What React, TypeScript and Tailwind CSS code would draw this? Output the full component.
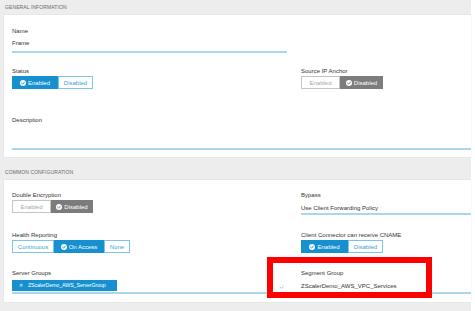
import React from "react";

type Opt = { label: string; w: string; active?: boolean };

function Check({ color }: { color: string }) {
  return (
    <svg width="6" height="6" viewBox="0 0 10 10" className="mr-[2px] shrink-0">
      <circle cx="5" cy="5" r="5" fill="#fff" />
      <path d="M2.6 5.2 L4.4 6.9 L7.5 3.4" stroke={color} strokeWidth="1.6" fill="none" strokeLinecap="round" strokeLinejoin="round" />
    </svg>
  );
}

function Toggle({ opts, tone }: { opts: Opt[]; tone: "blue" | "gray" }) {
  const blue = tone === "blue";
  return (
    <div className="flex h-[13px] mt-[1px] text-[6px] leading-none whitespace-nowrap">
      {opts.map((o) =>
        o.active ? (
          <div
            key={o.label}
            className={`${o.w} flex items-center justify-center text-white ${blue ? "bg-[#1690cf] border border-[#1690cf]" : "bg-[#7c7c7c] border border-[#7c7c7c]"}`}
          >
            <Check color={blue ? "#1690cf" : "#7c7c7c"} />
            {o.label}
          </div>
        ) : (
          <div
            key={o.label}
            className={`${o.w} flex items-center justify-center bg-white ${blue ? "border border-[#7cc4e8] text-[#3a9fd6]" : "border border-[#c4c4c4] text-[#a8a8a8]"}`}
          >
            {o.label}
          </div>
        )
      )}
    </div>
  );
}

function Label({ children }: { children: React.ReactNode }) {
  return <div className="text-[6px] leading-[8px] text-[#333] whitespace-nowrap">{children}</div>;
}

function Header({ children }: { children: React.ReactNode }) {
  return (
    <div className="h-[15px] flex items-center pl-[5px] text-[5px] text-[#6a6a6a] uppercase tracking-[0.1px]">
      {children}
    </div>
  );
}

export default function App() {
  return (
    <div
      className="relative w-[475px] h-[311px] bg-white overflow-hidden"
      style={{ fontFamily: '"Liberation Sans", Arial, sans-serif' }}
    >
      <div className="w-[471px] h-[311px] bg-[#ededed]">
        <Header>General Information</Header>
        <div className="ml-[4px] bg-white pl-[8px] pt-[12px] pb-[7px] shadow-[0_0_1px_rgba(0,0,0,0.15)]">
          <div className="w-[275px]">
            <Label>Name</Label>
            <div className="mt-[4px] pb-[4px] border-b-2 border-[#a9d8ee] text-[6px] leading-[8px] text-[#333]">
              Frame
            </div>
          </div>
          <div className="flex mt-[14px]">
            <div className="w-[275px]">
              <Label>Status</Label>
              <Toggle
                tone="blue"
                opts={[
                  { label: "Enabled", w: "w-[46px]", active: true },
                  { label: "Disabled", w: "w-[35px]" },
                ]}
              />
            </div>
            <div className="ml-[14px] flex-1">
              <Label>Source IP Anchor</Label>
              <Toggle
                tone="gray"
                opts={[
                  { label: "Enabled", w: "w-[39px]" },
                  { label: "Disabled", w: "w-[43px]", active: true },
                ]}
              />
            </div>
          </div>
          <div className="mt-[27px]">
            <Label>Description</Label>
            <div className="h-[26px] border-b-2 border-[#a9d8ee]" />
          </div>
        </div>

        <div className="mt-[8px]">
          <Header>Common Configuration</Header>
        </div>
        <div className="ml-[4px] bg-white pl-[8px] pt-[11px] pb-[8px] shadow-[0_0_1px_rgba(0,0,0,0.15)]">
          <div className="flex">
            <div className="w-[275px]">
              <Label>Double Encryption</Label>
              <Toggle
                tone="gray"
                opts={[
                  { label: "Enabled", w: "w-[39px]" },
                  { label: "Disabled", w: "w-[42px]", active: true },
                ]}
              />
            </div>
            <div className="ml-[14px] flex-1">
              <Label>Bypass</Label>
              <div className="mt-[5px] pb-[1px] border-b-2 border-[#a9d8ee] text-[6px] leading-[8px] text-[#333]">
                Use Client Forwarding Policy
              </div>
            </div>
          </div>
          <div className="flex mt-[16px]">
            <div className="w-[275px]">
              <Label>Health Reporting</Label>
              <Toggle
                tone="blue"
                opts={[
                  { label: "Continuous", w: "w-[42px]" },
                  { label: "On Access", w: "w-[50px]", active: true },
                  { label: "None", w: "w-[26px]" },
                ]}
              />
            </div>
            <div className="ml-[14px] flex-1">
              <Label>Client Connector can receive CNAME</Label>
              <Toggle
                tone="blue"
                opts={[
                  { label: "Enabled", w: "w-[47px]", active: true },
                  { label: "Disabled", w: "w-[35px]" },
                ]}
              />
            </div>
          </div>
          <div className="flex mt-[16px]">
            <div className="w-[275px]">
              <Label>Server Groups</Label>
              <div className="relative mt-[3px] pb-[1px] border-b-2 border-[#a9d8ee] flex items-center">
                <div className="h-[11px] w-[105px] bg-[#1690cf] text-white text-[5.3px] flex items-center pl-[7px] whitespace-nowrap tracking-[-0.1px]">
                  <span className="mr-[5px] leading-none">✕</span>
                  <span>ZScalerDemo_AWS_ServerGroup</span>
                </div>
                <svg width="5" height="3" viewBox="0 0 5 3" className="absolute right-[3px] bottom-[3px]">
                  <path d="M0.5 0.5 L2.5 2.5 L4.5 0.5" stroke="#8cc6e6" strokeWidth="0.8" fill="none" />
                </svg>
              </div>
            </div>
            <div className="ml-[14px] flex-1">
              <Label>Segment Group</Label>
              <div className="mt-[5px] pb-[2px] border-b-2 border-[#a9d8ee] text-[6px] leading-[8px] text-[#333]">
                ZScalerDemo_AWS_VPC_Services
              </div>
            </div>
          </div>
        </div>
      </div>

      <div className="absolute left-[267px] top-[257px] w-[165px] h-[41px] border-[6px] border-[#ff0000]" />
    </div>
  );
}
